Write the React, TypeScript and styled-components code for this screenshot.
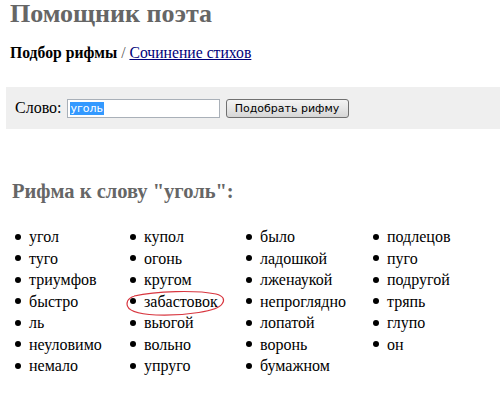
import React from "react";
import styled, { createGlobalStyle } from "styled-components";

const serif = `"Liberation Serif", "Times New Roman", serif`;
const ui = `"DejaVu Sans", Verdana, sans-serif`;

const GlobalStyle = createGlobalStyle`
    body {
        margin: 0;
        background: #ffffff;
        font-family: ${serif};
        color: #000000;
    }
`
const Page = styled.div`
    width: 500px;
    height: 396px;
    overflow: hidden;
    font-family: ${serif};
`
const Title = styled.h1`
    margin: 0;
    padding-left: 10px;
    font-family: ${serif};
    font-size: 26px;
    line-height: 28px;
    color: #666666;
`
const Nav = styled.div`
    margin-top: 16px;
    padding-left: 10px;
    font-family: ${serif};
    font-size: 15.7px;
    line-height: 18px;
`
const Current = styled.b`
    font-weight: bold;
`
const Slash = styled.span`
    color: #555555;
`
const NavLink = styled.a`
    color: #00007a;
    text-decoration: underline;
`
const SearchBar = styled.form`
    display: flex;
    align-items: center;
    margin: 25px 0 0 6px;
    height: 42px;
    padding-left: 9px;
    background: #efefef;
`
const Label = styled.span`
    font-family: ${serif};
    font-size: 16px;
    margin-right: 5px;
`
const Field = styled.div`
    box-sizing: border-box;
    width: 153px;
    height: 19px;
    padding: 1px 2px;
    border: 1px solid #a9b0b8;
    background: #ffffff;
    font-family: ${ui};
    font-size: 11px;
    line-height: 15px;
`
const Selected = styled.span`
    background: #3399ff;
    color: #ffffff;
    padding: 0 1px;
`
const Button = styled.button`
    box-sizing: border-box;
    margin-left: 6px;
    width: 123px;
    height: 19px;
    padding: 0;
    border: 1px solid #707070;
    border-radius: 3px;
    background: linear-gradient(#f4f4f4, #e6e6e6 50%, #d6d6d6);
    font-family: ${ui};
    font-size: 11px;
    color: #000000;
`
const Heading = styled.h2`
    margin: 50px 0 0 0;
    padding-left: 12px;
    font-family: ${serif};
    font-size: 20.5px;
    line-height: 24px;
    color: #666666;
`
const Columns = styled.div`
    display: grid;
    grid-template-columns: 115px 116px 127px 1fr;
    margin-top: 23px;
    padding-left: 15px;
`
const List = styled.ul`
    margin: 0;
    padding: 0;
    list-style: none;
`
const Item = styled.li`
    position: relative;
    display: flex;
    align-items: center;
    gap: 8px;
    font-family: ${serif};
    font-size: 16px;
    line-height: 21.5px;
    &::before {
        content: "";
        width: 6px;
        height: 6px;
        border-radius: 50%;
        background: #000000;
        flex: none;
    }
`
const Mark = styled.svg`
    position: absolute;
    left: -4px;
    top: 0;
    width: 100px;
    height: 26px;
    overflow: visible;
    pointer-events: none;
`

const columns = [
    ["угол", "туго", "триумфов", "быстро", "ль", "неуловимо", "немало"],
    ["купол", "огонь", "кругом", "забастовок", "вьюгой", "вольно", "упруго"],
    ["было", "ладошкой", "лженаукой", "непроглядно", "лопатой", "воронь", "бумажном"],
    ["подлецов", "пуго", "подругой", "тряпь", "глупо", "он"],
];

function App() {
    return (
        <Page>
            <GlobalStyle />
            <Title>Помощник поэта</Title>
            <Nav>
                <Current>Подбор рифмы</Current> <Slash>/</Slash> <NavLink href="#">Сочинение стихов</NavLink>
            </Nav>
            <SearchBar onSubmit={(e) => e.preventDefault()}>
                <Label>Слово:</Label>
                <Field><Selected>уголь</Selected></Field>
                <Button type="button">Подобрать рифму</Button>
            </SearchBar>
            <Heading>Рифма к слову "уголь":</Heading>
            <Columns>
                {columns.map((words, i) => (
                    <List key={i}>
                        {words.map((w) => (
                            <Item key={w}>
                                {w}
                                {w === "забастовок" && (
                                    <Mark viewBox="0 0 100 26">
                                        <path
                                            d="M8 5 C30 0 70 -1 90 3 C98 5 99 9 96 13 C92 20 60 25 30 24 C10 23 1 19 1 13 C1 8 5 5 14 4"
                                            fill="none"
                                            stroke="#d8363f"
                                            strokeWidth="1.2"
                                        />
                                    </Mark>
                                )}
                            </Item>
                        ))}
                    </List>
                ))}
            </Columns>
        </Page>
    )
}

export default App;
